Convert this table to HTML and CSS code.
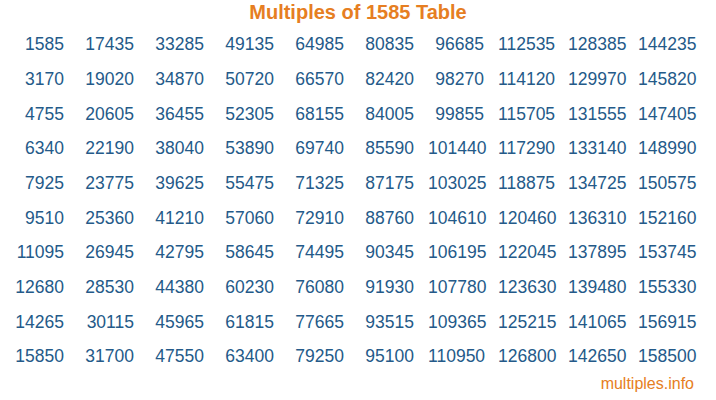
FILE: index.html
```html
<!DOCTYPE html>
<html>
<head>
<meta charset="utf-8">
<title>Multiples of 1585 Table</title>
<link rel="stylesheet" href="styles.css">
</head>
<body>
<h1 class="title">Multiples of 1585 Table</h1>
<div class="grid">
<div class="cell">1585</div><div class="cell">3170</div><div class="cell">4755</div><div class="cell">6340</div><div class="cell">7925</div><div class="cell">9510</div><div class="cell">11095</div><div class="cell">12680</div><div class="cell">14265</div><div class="cell">15850</div>
<div class="cell">17435</div><div class="cell">19020</div><div class="cell">20605</div><div class="cell">22190</div><div class="cell">23775</div><div class="cell">25360</div><div class="cell">26945</div><div class="cell">28530</div><div class="cell">30115</div><div class="cell">31700</div>
<div class="cell">33285</div><div class="cell">34870</div><div class="cell">36455</div><div class="cell">38040</div><div class="cell">39625</div><div class="cell">41210</div><div class="cell">42795</div><div class="cell">44380</div><div class="cell">45965</div><div class="cell">47550</div>
<div class="cell">49135</div><div class="cell">50720</div><div class="cell">52305</div><div class="cell">53890</div><div class="cell">55475</div><div class="cell">57060</div><div class="cell">58645</div><div class="cell">60230</div><div class="cell">61815</div><div class="cell">63400</div>
<div class="cell">64985</div><div class="cell">66570</div><div class="cell">68155</div><div class="cell">69740</div><div class="cell">71325</div><div class="cell">72910</div><div class="cell">74495</div><div class="cell">76080</div><div class="cell">77665</div><div class="cell">79250</div>
<div class="cell">80835</div><div class="cell">82420</div><div class="cell">84005</div><div class="cell">85590</div><div class="cell">87175</div><div class="cell">88760</div><div class="cell">90345</div><div class="cell">91930</div><div class="cell">93515</div><div class="cell">95100</div>
<div class="cell">96685</div><div class="cell">98270</div><div class="cell">99855</div><div class="cell">101440</div><div class="cell">103025</div><div class="cell">104610</div><div class="cell">106195</div><div class="cell">107780</div><div class="cell">109365</div><div class="cell">110950</div>
<div class="cell">112535</div><div class="cell">114120</div><div class="cell">115705</div><div class="cell">117290</div><div class="cell">118875</div><div class="cell">120460</div><div class="cell">122045</div><div class="cell">123630</div><div class="cell">125215</div><div class="cell">126800</div>
<div class="cell">128385</div><div class="cell">129970</div><div class="cell">131555</div><div class="cell">133140</div><div class="cell">134725</div><div class="cell">136310</div><div class="cell">137895</div><div class="cell">139480</div><div class="cell">141065</div><div class="cell">142650</div>
<div class="cell">144235</div><div class="cell">145820</div><div class="cell">147405</div><div class="cell">148990</div><div class="cell">150575</div><div class="cell">152160</div><div class="cell">153745</div><div class="cell">155330</div><div class="cell">156915</div><div class="cell">158500</div>
</div>
<div class="footer">multiples.info</div>
</body>
</html>
```
FILE: styles.css
```css
html, body {
  margin: 0;
  padding: 0;
  background: #ffffff;
}
body {
  width: 716px;
  height: 400px;
  overflow: hidden;
  font-family: "Liberation Sans", Arial, sans-serif;
}
.title {
  margin: 0;
  font-size: 20px;
  line-height: 24px;
  font-weight: bold;
  color: #e67e22;
  text-align: center;
}
.grid {
  margin: 3.3px 8px 0;
  display: grid;
  grid-template-columns: repeat(10, 70px);
  grid-template-rows: repeat(10, 34.7px);
  grid-auto-flow: column;
}
.cell {
  font-size: 17.5px;
  line-height: 34.7px;
  color: #245a89;
  text-align: right;
  padding-right: 14px;
  white-space: nowrap;
}
.footer {
  font-size: 16px;
  line-height: 20px;
  color: #e67e22;
  text-align: right;
  padding-right: 22px;
}
```
